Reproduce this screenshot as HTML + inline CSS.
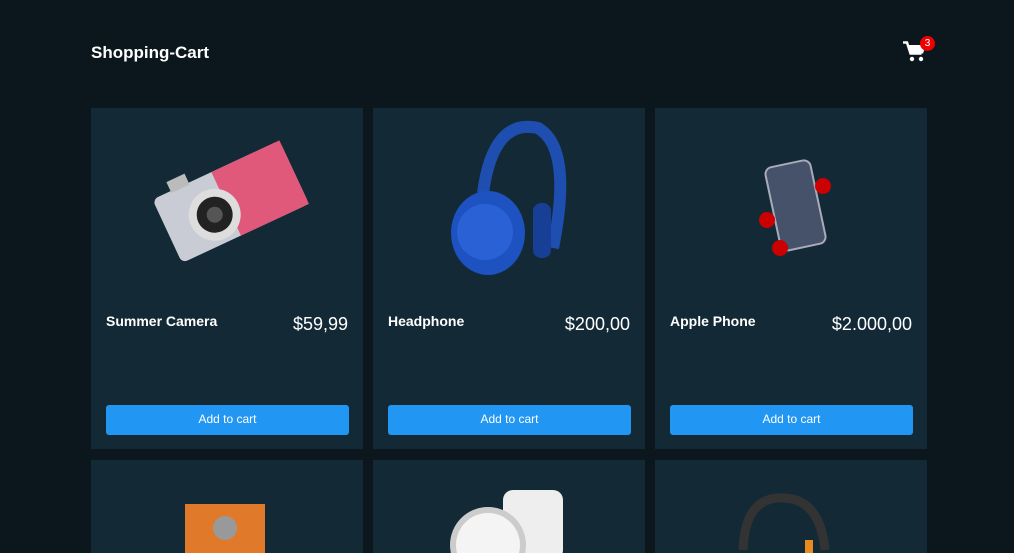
<!DOCTYPE html>
<html><head><style>
html,body{margin:0;height:553px;overflow:hidden}
body{background:#0b161d;font-family:"Liberation Sans",sans-serif;width:1014px;position:relative}
h1{position:absolute;left:91px;top:43px;margin:0;font-size:17px;color:#fff;font-weight:bold}
.cart{position:absolute;left:903px;top:41px}
.badge{position:absolute;left:920px;top:36px;width:15px;height:15px;border-radius:50%;background:#e00;color:#fff;font-size:10px;text-align:center;line-height:15px}
.card{position:absolute;width:272px;height:341px;background:#132a36}
.name{position:absolute;left:15px;top:205px;color:#fff;font-weight:bold;font-size:14px}
.price{position:absolute;right:15px;top:206px;color:#fff;font-size:18px}
.btn{position:absolute;left:15px;top:297px;width:243px;height:30px;background:#2196f3;border-radius:3px;color:#fff;font-size:12px;text-align:center;line-height:29px}
.img{position:absolute;left:0;top:0}
</style></head><body>
<h1>Shopping-Cart</h1>
<svg class="cart" width="24" height="21" viewBox="0 0 24 21"><path d="M0 1.5h4l3.5 11h11" fill="none" stroke="#fff" stroke-width="2.5"/><path d="M5 4h18l-3 8.5H8z" fill="#fff"/><circle cx="9" cy="18" r="2.2" fill="#fff"/><circle cx="18" cy="18" r="2.2" fill="#fff"/></svg>
<div class="badge">3</div>

<div class="card" style="left:91px;top:108px">
<svg class="img" width="272" height="190"><g transform="rotate(-25 137 95)"><rect x="70" y="60" width="140" height="70" rx="6" fill="#c9ccd4"/><rect x="135" y="60" width="75" height="70" fill="#e0587a"/><circle cx="120" cy="100" r="26" fill="#ddd"/><circle cx="120" cy="100" r="18" fill="#222"/><circle cx="120" cy="100" r="8" fill="#555"/><rect x="90" y="50" width="20" height="12" fill="#bbb"/></g></svg>
<div class="name">Summer Camera</div><div class="price">$59,99</div><div class="btn">Add to cart</div></div>

<div class="card" style="left:373px;top:108px">
<svg class="img" width="272" height="190"><path d="M110 85 Q120 10 165 20 Q200 40 180 140" fill="none" stroke="#1e4fb0" stroke-width="12"/><ellipse cx="115" cy="125" rx="37" ry="42" fill="#1d52c0"/><circle cx="112" cy="124" r="28" fill="#2a62d6"/><rect x="160" y="95" width="18" height="55" rx="8" fill="#173f96"/></svg>
<div class="name">Headphone</div><div class="price">$200,00</div><div class="btn">Add to cart</div></div>

<div class="card" style="left:655px;top:108px">
<svg class="img" width="272" height="190"><g transform="rotate(-12 140 95)"><rect x="117" y="55" width="46" height="85" rx="7" fill="#46526a" stroke="#aab" stroke-width="2"/></g><circle cx="112" cy="112" r="8" fill="#c00"/><circle cx="125" cy="140" r="8" fill="#c00"/><circle cx="168" cy="78" r="8" fill="#c00"/></svg>
<div class="name">Apple Phone</div><div class="price">$2.000,00</div><div class="btn">Add to cart</div></div>

<div class="card" style="left:91px;top:460px">
<svg class="img" width="272" height="100"><rect x="94" y="44" width="80" height="60" fill="#e07a2a"/><circle cx="134" cy="68" r="12" fill="#999"/></svg></div>
<div class="card" style="left:373px;top:460px">
<svg class="img" width="272" height="100"><rect x="130" y="30" width="60" height="70" rx="10" fill="#eee"/><circle cx="115" cy="85" r="38" fill="#ccc"/><circle cx="115" cy="85" r="32" fill="#f4f4f4"/></svg></div>
<div class="card" style="left:655px;top:460px">
<svg class="img" width="272" height="100"><path d="M88 90 Q90 35 130 38 Q165 40 170 90" fill="none" stroke="#333" stroke-width="9"/><rect x="150" y="80" width="8" height="20" fill="#e88a20"/></svg></div>
</body></html>
